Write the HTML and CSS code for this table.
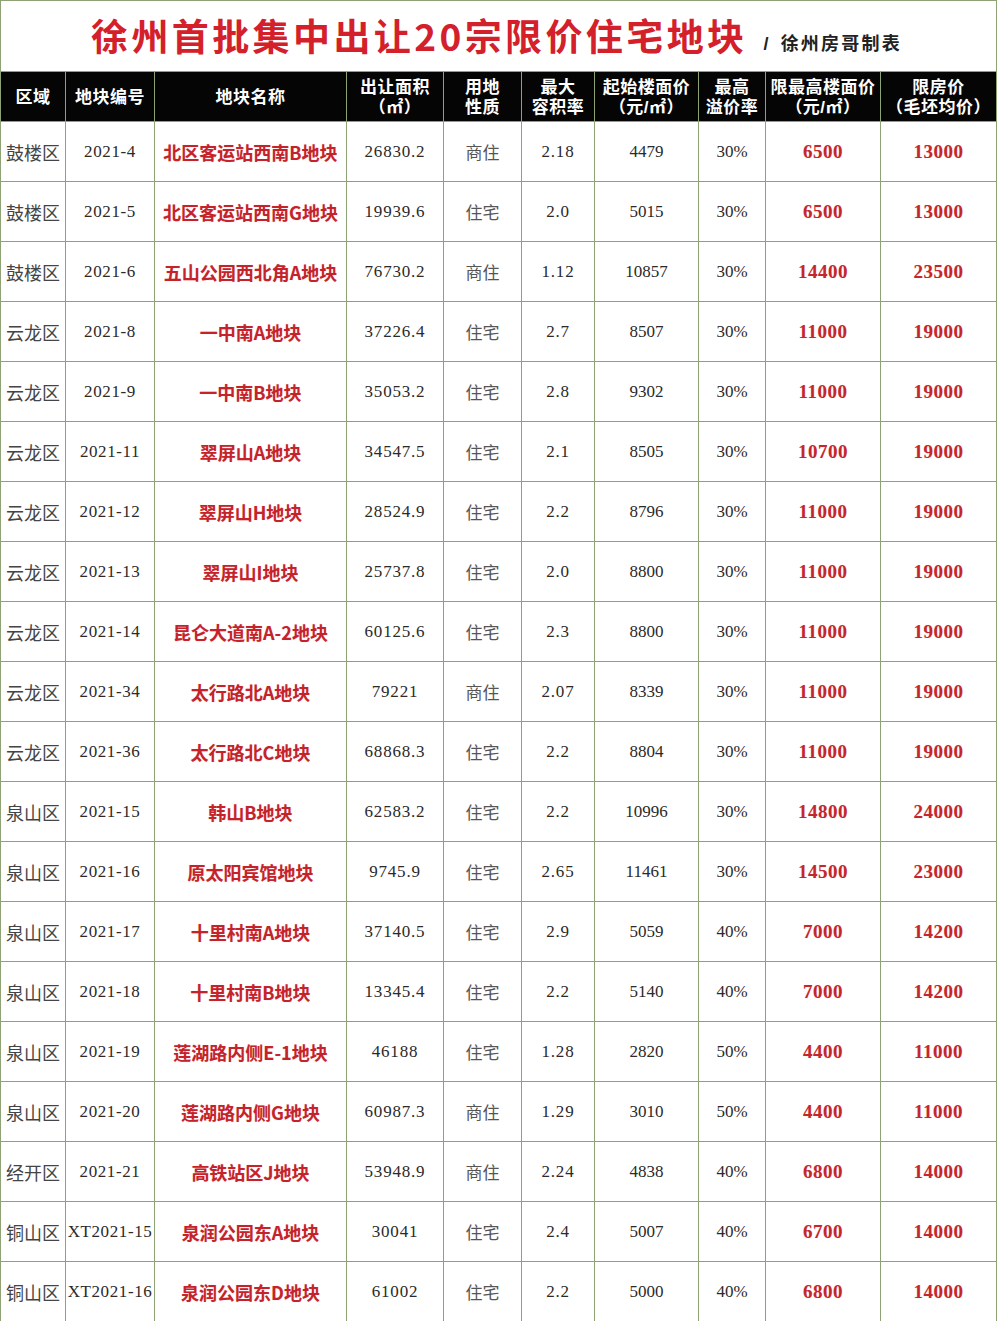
FILE: index.html
```html
<!DOCTYPE html>
<html lang="zh-CN">
<head>
<meta charset="utf-8">
<title>徐州首批集中出让20宗限价住宅地块</title>
<link rel="stylesheet" href="styles.css">
</head>
<body>
<div class="sheet">
  <div class="title">
    <span class="title-main">徐州首批集中出让20宗限价住宅地块</span>
    <span class="title-sub"><span class="slash">/</span>徐州房哥制表</span>
  </div>
  <div class="grid">
    <div class="h">区域</div>
    <div class="h">地块编号</div>
    <div class="h">地块名称</div>
    <div class="h">出让面积<br>（㎡）</div>
    <div class="h">用地<br>性质</div>
    <div class="h">最大<br>容积率</div>
    <div class="h">起始楼面价<br>（元/㎡）</div>
    <div class="h">最高<br>溢价率</div>
    <div class="h">限最高楼面价<br>（元/㎡）</div>
    <div class="h">限房价<br>（毛坯均价）</div>

    <div class="c rg">鼓楼区</div><div class="c cd">2021-4</div><div class="c nm">北区客运站西南B地块</div><div class="c num">26830.2</div><div class="c us">商住</div><div class="c num">2.18</div><div class="c pr">4479</div><div class="c pr">30%</div><div class="c rd">6500</div><div class="c rd">13000</div>
    <div class="c rg">鼓楼区</div><div class="c cd">2021-5</div><div class="c nm">北区客运站西南G地块</div><div class="c num">19939.6</div><div class="c us">住宅</div><div class="c num">2.0</div><div class="c pr">5015</div><div class="c pr">30%</div><div class="c rd">6500</div><div class="c rd">13000</div>
    <div class="c rg">鼓楼区</div><div class="c cd">2021-6</div><div class="c nm">五山公园西北角A地块</div><div class="c num">76730.2</div><div class="c us">商住</div><div class="c num">1.12</div><div class="c pr">10857</div><div class="c pr">30%</div><div class="c rd">14400</div><div class="c rd">23500</div>
    <div class="c rg">云龙区</div><div class="c cd">2021-8</div><div class="c nm">一中南A地块</div><div class="c num">37226.4</div><div class="c us">住宅</div><div class="c num">2.7</div><div class="c pr">8507</div><div class="c pr">30%</div><div class="c rd">11000</div><div class="c rd">19000</div>
    <div class="c rg">云龙区</div><div class="c cd">2021-9</div><div class="c nm">一中南B地块</div><div class="c num">35053.2</div><div class="c us">住宅</div><div class="c num">2.8</div><div class="c pr">9302</div><div class="c pr">30%</div><div class="c rd">11000</div><div class="c rd">19000</div>
    <div class="c rg">云龙区</div><div class="c cd">2021-11</div><div class="c nm">翠屏山A地块</div><div class="c num">34547.5</div><div class="c us">住宅</div><div class="c num">2.1</div><div class="c pr">8505</div><div class="c pr">30%</div><div class="c rd">10700</div><div class="c rd">19000</div>
    <div class="c rg">云龙区</div><div class="c cd">2021-12</div><div class="c nm">翠屏山H地块</div><div class="c num">28524.9</div><div class="c us">住宅</div><div class="c num">2.2</div><div class="c pr">8796</div><div class="c pr">30%</div><div class="c rd">11000</div><div class="c rd">19000</div>
    <div class="c rg">云龙区</div><div class="c cd">2021-13</div><div class="c nm">翠屏山I地块</div><div class="c num">25737.8</div><div class="c us">住宅</div><div class="c num">2.0</div><div class="c pr">8800</div><div class="c pr">30%</div><div class="c rd">11000</div><div class="c rd">19000</div>
    <div class="c rg">云龙区</div><div class="c cd">2021-14</div><div class="c nm">昆仑大道南A-2地块</div><div class="c num">60125.6</div><div class="c us">住宅</div><div class="c num">2.3</div><div class="c pr">8800</div><div class="c pr">30%</div><div class="c rd">11000</div><div class="c rd">19000</div>
    <div class="c rg">云龙区</div><div class="c cd">2021-34</div><div class="c nm">太行路北A地块</div><div class="c num">79221</div><div class="c us">商住</div><div class="c num">2.07</div><div class="c pr">8339</div><div class="c pr">30%</div><div class="c rd">11000</div><div class="c rd">19000</div>
    <div class="c rg">云龙区</div><div class="c cd">2021-36</div><div class="c nm">太行路北C地块</div><div class="c num">68868.3</div><div class="c us">住宅</div><div class="c num">2.2</div><div class="c pr">8804</div><div class="c pr">30%</div><div class="c rd">11000</div><div class="c rd">19000</div>
    <div class="c rg">泉山区</div><div class="c cd">2021-15</div><div class="c nm">韩山B地块</div><div class="c num">62583.2</div><div class="c us">住宅</div><div class="c num">2.2</div><div class="c pr">10996</div><div class="c pr">30%</div><div class="c rd">14800</div><div class="c rd">24000</div>
    <div class="c rg">泉山区</div><div class="c cd">2021-16</div><div class="c nm">原太阳宾馆地块</div><div class="c num">9745.9</div><div class="c us">住宅</div><div class="c num">2.65</div><div class="c pr">11461</div><div class="c pr">30%</div><div class="c rd">14500</div><div class="c rd">23000</div>
    <div class="c rg">泉山区</div><div class="c cd">2021-17</div><div class="c nm">十里村南A地块</div><div class="c num">37140.5</div><div class="c us">住宅</div><div class="c num">2.9</div><div class="c pr">5059</div><div class="c pr">40%</div><div class="c rd">7000</div><div class="c rd">14200</div>
    <div class="c rg">泉山区</div><div class="c cd">2021-18</div><div class="c nm">十里村南B地块</div><div class="c num">13345.4</div><div class="c us">住宅</div><div class="c num">2.2</div><div class="c pr">5140</div><div class="c pr">40%</div><div class="c rd">7000</div><div class="c rd">14200</div>
    <div class="c rg">泉山区</div><div class="c cd">2021-19</div><div class="c nm">莲湖路内侧E-1地块</div><div class="c num">46188</div><div class="c us">住宅</div><div class="c num">1.28</div><div class="c pr">2820</div><div class="c pr">50%</div><div class="c rd">4400</div><div class="c rd">11000</div>
    <div class="c rg">泉山区</div><div class="c cd">2021-20</div><div class="c nm">莲湖路内侧G地块</div><div class="c num">60987.3</div><div class="c us">商住</div><div class="c num">1.29</div><div class="c pr">3010</div><div class="c pr">50%</div><div class="c rd">4400</div><div class="c rd">11000</div>
    <div class="c rg">经开区</div><div class="c cd">2021-21</div><div class="c nm">高铁站区J地块</div><div class="c num">53948.9</div><div class="c us">商住</div><div class="c num">2.24</div><div class="c pr">4838</div><div class="c pr">40%</div><div class="c rd">6800</div><div class="c rd">14000</div>
    <div class="c rg">铜山区</div><div class="c cd">XT2021-15</div><div class="c nm">泉润公园东A地块</div><div class="c num">30041</div><div class="c us">住宅</div><div class="c num">2.4</div><div class="c pr">5007</div><div class="c pr">40%</div><div class="c rd">6700</div><div class="c rd">14000</div>
    <div class="c rg">铜山区</div><div class="c cd">XT2021-16</div><div class="c nm">泉润公园东D地块</div><div class="c num">61002</div><div class="c us">住宅</div><div class="c num">2.2</div><div class="c pr">5000</div><div class="c pr">40%</div><div class="c rd">6800</div><div class="c rd">14000</div>
  </div>
</div>
</body>
</html>
```
FILE: styles.css
```css
html, body {
  margin: 0;
  padding: 0;
  background: #ffffff;
}
body {
  width: 997px;
  height: 1321px;
  overflow: hidden;
}
.sheet {
  width: 997px;
  box-sizing: border-box;
  padding: 1px;
  background: #8ea276;
  display: flex;
  flex-direction: column;
  gap: 1px;
}
.title {
  height: 70px;
  background: #ffffff;
  display: flex;
  align-items: center;
  padding-left: 90px;
  box-sizing: border-box;
}
.title-main {
  font-family: "Noto Sans CJK SC", "Noto Sans", sans-serif;
  font-weight: 700;
  font-size: 37px;
  letter-spacing: 3.4px;
  color: #d4202a;
  line-height: 1;
  margin-top: -2px;
}
.title-sub {
  font-family: "Noto Sans CJK SC", serif;
  font-weight: 700;
  font-size: 18px;
  color: #222;
  letter-spacing: 2.2px;
  margin-left: 16px;
  margin-top: 12px;
}
.slash {
  font-family: "Liberation Sans", sans-serif;
  margin-right: 10px;
  font-weight: 700;
}
.grid {
  display: grid;
  grid-template-columns: 64px 88px 191px 96px 77px 72px 103px 66px 114px 115px;
  grid-template-rows: 49px;
  grid-auto-rows: 59px;
  gap: 1px;
}
.h {
  background: #050505;
  color: #ffffff;
  font-family: "Liberation Sans", "Noto Sans CJK SC", sans-serif;
  font-weight: 700;
  font-size: 17px;
  line-height: 20px;
  display: flex;
  align-items: center;
  justify-content: center;
  text-align: center;
  white-space: nowrap;
  letter-spacing: 0.5px;
  padding-top: 3px;
  box-sizing: border-box;
}
.c {
  background: #ffffff;
  display: flex;
  align-items: center;
  justify-content: center;
  white-space: nowrap;
  color: #2a2a2a;
}
.rg {
  font-family: "Noto Sans CJK SC", sans-serif;
  font-size: 18px;
  color: #444;
  font-weight: 400;
}
.cd {
  font-family: "Liberation Serif", "Noto Sans CJK SC", serif;
  font-size: 17px;
  letter-spacing: 0.6px;
}
.nm {
  font-family: "Noto Sans CJK SC", serif;
  font-size: 18px;
  font-weight: 700;
  color: #c5232b;
  text-shadow: 0 0 1px rgba(220, 60, 60, 0.25);
}
.num {
  font-family: "Liberation Serif", serif;
  font-size: 17px;
  letter-spacing: 0.8px;
}
.us {
  font-family: "Noto Sans CJK SC", sans-serif;
  font-size: 17px;
  color: #555;
}
.pr {
  font-family: "Liberation Serif", serif;
  font-size: 17px;
}
.rd {
  font-family: "Liberation Serif", serif;
  font-size: 19px;
  font-weight: 700;
  color: #c4262e;
  letter-spacing: 0.5px;
  text-shadow: 0 0 1px rgba(220, 60, 60, 0.25);
}
```
